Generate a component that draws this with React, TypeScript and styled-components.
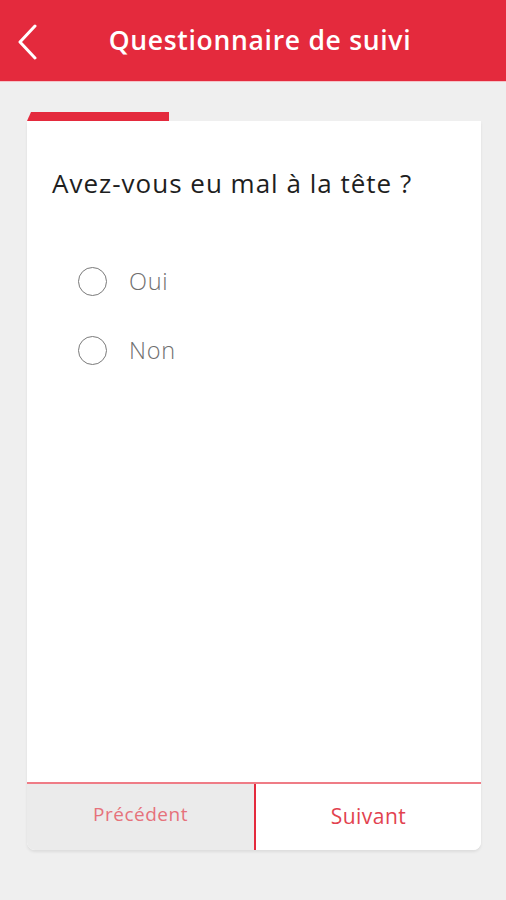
import React, { useState } from "react";
import styled, { createGlobalStyle } from "styled-components";

const Global = createGlobalStyle`
  html, body { margin: 0; padding: 0; background: #efefef; }
  body { font-family: "Open Sans", "Lato", sans-serif; }
  * { box-sizing: border-box; }
`;

const Page = styled.div`
  width: 506px;
  height: 900px;
  background: #efefef;
  display: flex;
  flex-direction: column;
`;

const Header = styled.header`
  height: 82px;
  background: #e42a3d;
  display: flex;
  align-items: center;
  justify-content: center;
  position: relative;
  border-bottom: 1px solid #f4c3c8;
`;

const BackButton = styled.button`
  position: absolute;
  left: 12px;
  top: 21px;
  width: 30px;
  height: 42px;
  background: none;
  border: none;
  padding: 0;
  display: flex;
  align-items: center;
  justify-content: center;
`;

const Title = styled.h1`
  margin: 0;
  color: #fff;
  font-family: "Open Sans", sans-serif;
  font-weight: 600;
  font-size: 26.5px;
  letter-spacing: 0.7px;
  padding-left: 14px;
  padding-bottom: 1px;
`;

const Main = styled.main`
  padding: 30px 25px 0 27px;
  display: flex;
  flex-direction: column;
`;

const ProgressTrack = styled.div`
  height: 9px;
  display: flex;
`;

const ProgressFill = styled.div`
  height: 9px;
  background: #e42a3d;
  clip-path: polygon(4px 0, 100% 0, 100% 100%, 0 100%);
`;

const Card = styled.section`
  background: #fff;
  height: 729px;
  display: flex;
  flex-direction: column;
  border-radius: 0 0 8px 8px;
  box-shadow: 0 2px 3px rgba(0, 0, 0, 0.08);
  overflow: hidden;
`;

const Body = styled.div`
  flex: 1;
  padding: 47px 25px 0 25px;
`;

const Question = styled.h2`
  margin: 0;
  font-family: "Open Sans", sans-serif;
  font-weight: 400;
  font-size: 26px;
  letter-spacing: 1px;
  line-height: 30px;
  color: #1e1e1e;
`;

const Options = styled.div`
  margin-top: 68px;
  padding-left: 26px;
  display: flex;
  flex-direction: column;
  gap: 39px;
`;

const Option = styled.label`
  display: flex;
  align-items: center;
  gap: 22px;
  height: 30px;
  cursor: pointer;
`;

const Radio = styled.span<{ $checked: boolean }>`
  width: 29px;
  height: 29px;
  flex: none;
  border-radius: 50%;
  border: 1.5px solid #7a7a7a;
  display: flex;
  align-items: center;
  justify-content: center;
  &::after {
    content: "";
    width: 15px;
    height: 15px;
    border-radius: 50%;
    background: ${(p) => (p.$checked ? "#e42a3d" : "transparent")};
  }
`;

const OptionText = styled.span`
  font-family: "Open Sans", sans-serif;
  font-size: 23.5px;
  font-weight: 300;
  letter-spacing: 0.7px;
  color: #6f6f6f;
`;

const Footer = styled.div`
  height: 68px;
  border-top: 2px solid #ef7c86;
  display: grid;
  grid-template-columns: 227px 1fr;
`;

const NavButton = styled.button<{ $primary?: boolean }>`
  border: none;
  margin: 0;
  padding: 0 0 ${(p) => (p.$primary ? "2px" : "6px")};
  background: ${(p) => (p.$primary ? "#ffffff" : "#ebebeb")};
  color: ${(p) => (p.$primary ? "#e2424f" : "#e6727b")};
  font-family: "Open Sans", sans-serif;
  font-weight: 400;
  font-size: ${(p) => (p.$primary ? "21px" : "19px")};
  letter-spacing: 0.5px;
  border-left: ${(p) => (p.$primary ? "2px solid #e42a3d" : "none")};
  display: flex;
  align-items: center;
  justify-content: center;
`;

export default function App() {
  const [value, setValue] = useState<string | null>(null);
  const options = ["Oui", "Non"];
  return (
    <Page>
      <Global />
      <Header>
        <BackButton aria-label="Retour">
          <svg width="24" height="36" viewBox="0 0 24 36" fill="none">
            <path d="M20 2 L5 18 L20 34" stroke="#fff" strokeWidth="3" strokeLinecap="round" strokeLinejoin="round" />
          </svg>
        </BackButton>
        <Title>Questionnaire de suivi</Title>
      </Header>
      <Main>
        <ProgressTrack>
          <ProgressFill style={{ width: `${(142 / 454) * 100}%` }} />
        </ProgressTrack>
        <Card>
          <Body>
            <Question>Avez-vous eu mal à la tête ?</Question>
            <Options>
              {options.map((o) => (
                <Option key={o} onClick={() => setValue(o)}>
                  <Radio $checked={value === o} />
                  <OptionText>{o}</OptionText>
                </Option>
              ))}
            </Options>
          </Body>
          <Footer>
            <NavButton>Précédent</NavButton>
            <NavButton $primary>Suivant</NavButton>
          </Footer>
        </Card>
      </Main>
    </Page>
  );
}
